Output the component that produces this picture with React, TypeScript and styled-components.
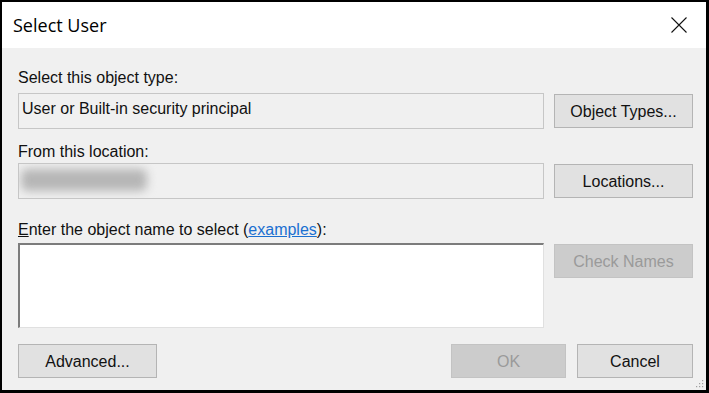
import React from "react";
import styled, { createGlobalStyle } from "styled-components";

const GlobalStyle = createGlobalStyle`
  html, body {
    margin: 0;
    padding: 0;
    background: #ffffff;
  }
  * {
    box-sizing: border-box;
  }
`;

const Window = styled.div`
  width: 709px;
  height: 393px;
  border-style: solid;
  border-color: #000;
  border-width: 2px 3px 3px 2px;
  display: flex;
  flex-direction: column;
  background: #f0f0f0;
  font-family: "Liberation Sans", Arial, sans-serif;
  font-size: 16px;
  color: #111;
  position: relative;
`;

const TitleBar = styled.div`
  height: 46px;
  flex-shrink: 0;
  background: #ffffff;
  display: flex;
  align-items: center;
  justify-content: space-between;
  padding: 0 10px 0 11px;
`;

const Title = styled.div`
  font-family: "Open Sans", "Noto Sans", sans-serif;
  font-size: 18px;
  color: #000;
  margin-top: -1px;
`;

const CloseButton = styled.div`
  width: 30px;
  height: 30px;
  display: flex;
  align-items: center;
  justify-content: center;
  margin-right: 2px;
`;

const Body = styled.div`
  flex: 1;
  display: grid;
  grid-template-columns: 526px 139px;
  column-gap: 10px;
  align-content: start;
  padding: 18px 0 0 16px;
`;

const Label = styled.div<{ $top: number; $bottom: number }>`
  grid-column: 1 / -1;
  height: 20px;
  line-height: 20px;
  padding-top: 2px;
  margin-top: ${p => p.$top}px;
  margin-bottom: ${p => p.$bottom}px;
  color: #111;
`;

const ReadField = styled.div`
  height: 36px;
  background: #f0f0f0;
  border: 1px solid #c6c6c6;
  padding: 5px 0 0 3px;
  line-height: 20px;
  color: #111;
  overflow: hidden;
`;

const BlurredText = styled.div`
  width: 126px;
  height: 22px;
  margin-left: -1px;
  background: #b6b6b6;
  border-radius: 6px;
  filter: blur(5px);
`;

const TextInput = styled.div`
  height: 85px;
  background: #ffffff;
  border-style: solid;
  border-width: 2px 1px 1px 2px;
  border-color: #7c7c7c #e0e0e0 #e0e0e0 #7c7c7c;
`;

const Button = styled.div<{ $disabled?: boolean; $width?: number }>`
  height: 34px;
  width: ${p => (p.$width ? `${p.$width}px` : "auto")};
  display: flex;
  align-items: center;
  justify-content: center;
  padding-top: 2px;
  background: ${p => (p.$disabled ? "#cccccc" : "#e1e1e1")};
  border: 1px solid ${p => (p.$disabled ? "#c3c3c3" : "#b4b4b4")};
  color: ${p => (p.$disabled ? "#9a9a9a" : "#111")};
  line-height: 20px;
`;

const SideButton = styled(Button)<{ $top?: number }>`
  align-self: ${p => (p.$top !== undefined ? "start" : "center")};
  margin-top: ${p => p.$top ?? 0}px;
`;

const Footer = styled.div`
  grid-column: 1 / -1;
  margin-top: 16px;
  display: flex;
  gap: 11px;
`;

const Spacer = styled.div`
  flex: 1;
`;

const Link = styled.span`
  color: #1a6fd0;
  text-decoration: underline;
`;

const Accel = styled.span`
  text-decoration: underline;
`;

const Grip = styled.svg`
  position: absolute;
  right: 2px;
  bottom: 2px;
`;

export default function App() {
  return (
    <>
      <GlobalStyle />
      <Window>
        <TitleBar>
          <Title>Select User</Title>
          <CloseButton>
            <svg width="16" height="16" viewBox="0 0 16 16">
              <path d="M0.5 0.5 L15.5 15.5 M15.5 0.5 L0.5 15.5" stroke="#111" strokeWidth="1.1" fill="none" />
            </svg>
          </CloseButton>
        </TitleBar>
        <Body>
          <Label $top={0} $bottom={7}>Select this object type:</Label>
          <ReadField>User or Built-in security principal</ReadField>
          <SideButton>Object Types...</SideButton>

          <Label $top={11} $bottom={3}>From this location:</Label>
          <ReadField>
            <BlurredText />
          </ReadField>
          <SideButton>Locations...</SideButton>

          <Label $top={19} $bottom={5}>
            <Accel>E</Accel>nter the object name to select (<Link>examples</Link>):
          </Label>
          <TextInput />
          <SideButton $disabled $top={1}>Check Names</SideButton>

          <Footer>
            <Button $width={139}>Advanced...</Button>
            <Spacer />
            <Button $disabled $width={115}>OK</Button>
            <Button $width={116}>Cancel</Button>
          </Footer>
        </Body>
        <Grip width="8" height="8" viewBox="0 0 8 8">
          <rect x="6" y="0" width="1.2" height="1.2" fill="#a0a0a0" />
          <rect x="3" y="3" width="1.2" height="1.2" fill="#a0a0a0" />
          <rect x="6" y="3" width="1.2" height="1.2" fill="#a0a0a0" />
          <rect x="0" y="6" width="1.2" height="1.2" fill="#a0a0a0" />
          <rect x="3" y="6" width="1.2" height="1.2" fill="#a0a0a0" />
          <rect x="6" y="6" width="1.2" height="1.2" fill="#a0a0a0" />
        </Grip>
      </Window>
    </>
  );
}
